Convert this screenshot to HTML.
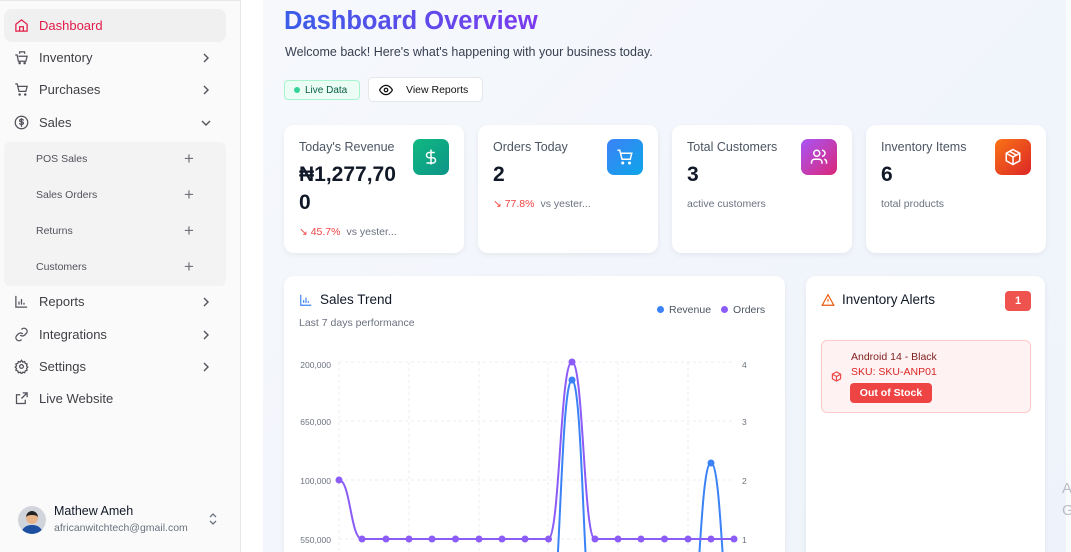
<!DOCTYPE html>
<html><head><meta charset="utf-8"><style>
*{box-sizing:border-box;margin:0;padding:0}
html{width:1071px;height:552px;overflow:hidden}
body{width:1071px;height:552px;overflow:hidden;font-family:"Liberation Sans",sans-serif;background:#fff;position:relative}
.sb{position:absolute;left:0;top:0;width:241px;height:552px;background:#fafafa;border-right:1px solid #e5e7eb;border-top:1px solid #e5e7eb}
.nav{position:absolute;left:4px;width:222px;height:33px;display:flex;align-items:center;font-size:13px;color:#3f3f46}
.nav svg.i{position:absolute;left:10px;width:15px;height:15px}
.nav span{position:absolute;left:35px}
.nav .ch{position:absolute;right:14px;width:12px;height:12px}
.sub{position:absolute;left:4px;top:141px;width:222px;height:144px;background:#f3f3f4;border-radius:6px}
.si{position:absolute;left:32px;font-size:10.5px;color:#52525b}
.pl{position:absolute;left:180px;font-size:17px;color:#71717a;font-weight:300}
.main{position:absolute;left:263px;top:0;width:803px;height:552px;background:linear-gradient(135deg,#f6f8fc,#eef3fb);overflow:hidden}
.card{position:absolute;background:#fff;border-radius:10px;box-shadow:0 2px 6px rgba(0,0,0,.06)}
.lbl{position:absolute;left:15px;top:15px;font-size:12.5px;color:#4b5563}
.val{position:absolute;left:15px;top:36px;font-size:21px;font-weight:bold;color:#111827;line-height:28px}
.ic{position:absolute;right:15px;top:14px;width:36px;height:36px;border-radius:7px;display:flex;align-items:center;justify-content:center}
.ic svg{width:18px;height:18px}
.tr{position:absolute;left:15px;font-size:10.5px;color:#ef4444}
.tr b{font-weight:normal;color:#6b7280;margin-left:6px}
.sm{position:absolute;left:15px;top:73px;font-size:10.5px;color:#6b7280}
</style></head><body>
<div class="sb">
 <div class="nav" style="top:8px;background:#f0f0f1;border-radius:8px;height:33px;color:#e11d48">
  <svg class="i" viewBox="0 0 24 24" fill="none" stroke="#e11d48" stroke-width="2"><path d="M3 10l9-7 9 7v11H3z"/><path d="M9 21v-7h6v7"/></svg><span>Dashboard</span></div>
 <div class="nav" style="top:40px"><svg class="i" viewBox="0 0 24 24" fill="none" stroke="#52525b" stroke-width="2"><path d="M2 8h3l2 10h12l2-8H7"/><path d="M9 6V3h8v3"/><circle cx="9" cy="21" r="1"/><circle cx="17" cy="21" r="1"/></svg><span>Inventory</span><svg class="ch" viewBox="0 0 12 12" fill="none" stroke="#52525b" stroke-width="1.4"><path d="M4 2l4 4-4 4"/></svg></div>
 <div class="nav" style="top:72px"><svg class="i" viewBox="0 0 24 24" fill="none" stroke="#52525b" stroke-width="2"><path d="M2 3h3l3 12h11l2-8H6"/><circle cx="9" cy="20" r="1"/><circle cx="18" cy="20" r="1"/></svg><span>Purchases</span><svg class="ch" viewBox="0 0 12 12" fill="none" stroke="#52525b" stroke-width="1.4"><path d="M4 2l4 4-4 4"/></svg></div>
 <div class="nav" style="top:105px"><svg class="i" viewBox="0 0 24 24" fill="none" stroke="#52525b" stroke-width="2"><circle cx="12" cy="12" r="10"/><path d="M15 9c0-1-1-2-3-2s-3 1-3 2 1 2 3 2 3 1 3 2-1 2-3 2-3-1-3-2M12 5v14"/></svg><span>Sales</span><svg class="ch" viewBox="0 0 12 12" fill="none" stroke="#52525b" stroke-width="1.4"><path d="M2 4l4 4 4-4"/></svg></div>
 <div class="sub">
  <div class="si" style="top:11px">POS Sales</div><div class="pl" style="top:7px">+</div>
  <div class="si" style="top:47px">Sales Orders</div><div class="pl" style="top:43px">+</div>
  <div class="si" style="top:83px">Returns</div><div class="pl" style="top:79px">+</div>
  <div class="si" style="top:119px">Customers</div><div class="pl" style="top:115px">+</div>
 </div>
 <div class="nav" style="top:284px"><svg class="i" viewBox="0 0 24 24" fill="none" stroke="#52525b" stroke-width="2"><path d="M3 3v18h18M8 17v-5M12 17V8M16 17v-3"/></svg><span>Reports</span><svg class="ch" viewBox="0 0 12 12" fill="none" stroke="#52525b" stroke-width="1.4"><path d="M4 2l4 4-4 4"/></svg></div>
 <div class="nav" style="top:317px"><svg class="i" viewBox="0 0 24 24" fill="none" stroke="#52525b" stroke-width="2"><path d="M10 13a5 5 0 007 0l3-3a5 5 0 00-7-7l-1 1M14 11a5 5 0 00-7 0l-3 3a5 5 0 007 7l1-1"/></svg><span>Integrations</span><svg class="ch" viewBox="0 0 12 12" fill="none" stroke="#52525b" stroke-width="1.4"><path d="M4 2l4 4-4 4"/></svg></div>
 <div class="nav" style="top:349px"><svg class="i" viewBox="0 0 24 24" fill="none" stroke="#52525b" stroke-width="2"><circle cx="12" cy="12" r="3"/><path d="M12 2l2 3 3-1 1 3 3 1-1 3 2 2-2 2 1 3-3 1-1 3-3-1-2 3-2-3-3 1-1-3-3-1 1-3-2-2 2-2-1-3 3-1 1-3 3 1z"/></svg><span>Settings</span><svg class="ch" viewBox="0 0 12 12" fill="none" stroke="#52525b" stroke-width="1.4"><path d="M4 2l4 4-4 4"/></svg></div>
 <div class="nav" style="top:381px"><svg class="i" viewBox="0 0 24 24" fill="none" stroke="#52525b" stroke-width="2"><path d="M14 3h7v7M21 3l-9 9M18 14v6H4V6h6"/></svg><span>Live Website</span></div>
 <div style="position:absolute;left:18px;top:505px;width:28px;height:28px;border-radius:50%;background:#d1d5db;overflow:hidden"><div style="position:absolute;left:8px;top:5px;width:12px;height:13px;border-radius:50%;background:#e8b48a;border-top:4px solid #222"></div><div style="position:absolute;left:3px;top:19px;width:22px;height:12px;border-radius:10px 10px 0 0;background:#1e4fa0"></div></div>
 <div style="position:absolute;left:54px;top:503px;font-size:12.5px;color:#111827">Mathew Ameh</div>
 <div style="position:absolute;left:54px;top:521px;font-size:10.5px;color:#6b7280">africanwitchtech@gmail.com</div>
 <svg style="position:absolute;left:207px;top:511px" width="12" height="14" viewBox="0 0 12 14" fill="none" stroke="#6b7280" stroke-width="1.3"><path d="M3 5l3-3 3 3M3 9l3 3 3-3"/></svg>
</div>
<div class="main">
 <div style="position:absolute;left:21px;top:7px;font-size:25.5px;font-weight:bold;background:linear-gradient(90deg,#3b5ee8,#7c3aed);-webkit-background-clip:text;color:transparent">Dashboard Overview</div>
 <div style="position:absolute;left:22px;top:45px;font-size:12.5px;color:#374151">Welcome back! Here's what's happening with your business today.</div>
 <div style="position:absolute;left:21px;top:80px;width:76px;height:20px;border:1px solid #a7f3d0;background:#ecfdf5;border-radius:4px;font-size:10px;color:#065f46;padding:4px 0 0 20px">Live Data<span style="position:absolute;left:9px;top:6px;width:6px;height:6px;border-radius:50%;background:#34d399"></span></div>
 <div style="position:absolute;left:105px;top:77px;width:115px;height:25px;border:1px solid #e5e7eb;background:#fff;border-radius:5px;font-size:10.5px;color:#111;padding:6px 0 0 37px">View Reports<svg style="position:absolute;left:10px;top:6px" width="14" height="12" viewBox="0 0 24 20" fill="none" stroke="#111" stroke-width="2.2"><path d="M1 10s4-8 11-8 11 8 11 8-4 8-11 8S1 10 1 10z"/><circle cx="12" cy="10" r="3"/></svg></div>

 <div class="card" style="left:21px;top:125px;width:180px;height:128px">
  <div class="lbl">Today's Revenue</div><div class="val">₦1,277,70<br>0</div>
  <div class="ic" style="background:linear-gradient(135deg,#10b981,#0d9488)"><svg viewBox="0 0 24 24" fill="none" stroke="#fff" stroke-width="2"><path d="M12 2v20M17 6H9.5a3.5 3.5 0 000 7h5a3.5 3.5 0 010 7H6"/></svg></div>
  <div class="tr" style="top:101px">↘ 45.7%<b>vs yester...</b></div></div>
 <div class="card" style="left:215px;top:125px;width:180px;height:128px">
  <div class="lbl">Orders Today</div><div class="val">2</div>
  <div class="ic" style="background:linear-gradient(135deg,#3b82f6,#0ea5e9)"><svg viewBox="0 0 24 24" fill="none" stroke="#fff" stroke-width="2"><path d="M2 3h3l3 12h11l2-8H6"/><circle cx="9" cy="20" r="1"/><circle cx="18" cy="20" r="1"/></svg></div>
  <div class="tr" style="top:73px">↘ 77.8%<b>vs yester...</b></div></div>
 <div class="card" style="left:409px;top:125px;width:180px;height:128px">
  <div class="lbl">Total Customers</div><div class="val">3</div>
  <div class="ic" style="background:linear-gradient(135deg,#a855f7,#db2777)"><svg viewBox="0 0 24 24" fill="none" stroke="#fff" stroke-width="2"><circle cx="9" cy="7" r="4"/><path d="M2 21v-2a4 4 0 014-4h6a4 4 0 014 4v2M16 3a4 4 0 010 8M22 21v-2a4 4 0 00-3-4"/></svg></div>
  <div class="sm">active customers</div></div>
 <div class="card" style="left:603px;top:125px;width:180px;height:128px">
  <div class="lbl">Inventory Items</div><div class="val">6</div>
  <div class="ic" style="background:linear-gradient(135deg,#f97316,#dc2626)"><svg viewBox="0 0 24 24" fill="none" stroke="#fff" stroke-width="2"><path d="M12 2l9 5v10l-9 5-9-5V7z"/><path d="M3 7l9 5 9-5M12 12v10M7.5 4.5l9 5"/></svg></div>
  <div class="sm">total products</div></div>

 <div class="card" style="left:21px;top:276px;width:501px;height:290px">
  <svg style="position:absolute;left:15px;top:17px" width="14" height="14" viewBox="0 0 24 24" fill="none" stroke="#3b82f6" stroke-width="2"><path d="M3 3v18h18M8 17v-5M12 17V8M16 17v-3"/></svg>
  <div style="position:absolute;left:36px;top:16px;font-size:13.5px;color:#111827">Sales Trend</div>
  <div style="position:absolute;left:15px;top:41px;font-size:10.5px;color:#6b7280">Last 7 days performance</div>
  <div style="position:absolute;left:373px;top:28px;font-size:10.5px;color:#4b5563"><span style="display:inline-block;width:7px;height:7px;border-radius:50%;background:#3b82f6;margin-right:5px"></span>Revenue<span style="display:inline-block;width:7px;height:7px;border-radius:50%;background:#8b5cf6;margin:0 5px 0 10px"></span>Orders</div>
 </div>
 <svg style="position:absolute;left:-263px;top:0" width="1071" height="552">
  <g stroke="#eceef2" stroke-dasharray="3 3" fill="none">
   <path d="M339 362H732M339 421H732M339 480H732M339 539H732M339 362V552M409 362V552M479 362V552M548 362V552M618 362V552M688 362V552"/>
  </g>
  <g font-size="8.5" fill="#6b7280" font-family="Liberation Sans">
   <text x="331" y="368" text-anchor="end">200,000</text><text x="331" y="425" text-anchor="end">650,000</text><text x="331" y="484" text-anchor="end">100,000</text><text x="331" y="543" text-anchor="end">550,000</text>
   <text x="742" y="368">4</text><text x="742" y="425">3</text><text x="742" y="484">2</text><text x="742" y="543">1</text>
  </g>
  <path d="M525,640 L548,640 C560,640 560,380 572,380 C583.5,380 583.5,640 595,640 M688,640 C699.5,640 699.5,463 711,463 C722.5,463 722.5,640 734,640" stroke="#3b82f6" stroke-width="2" fill="none"/>
  <path d="M339,480 C350.5,480 350.5,539 362,539 L548,539 C560,539 560,362 572,362 C583.5,362 583.5,539 595,539 L734,539" stroke="#8b5cf6" stroke-width="2" fill="none"/>
  <g fill="#8b5cf6">
   <circle cx="339" cy="480" r="3.5"/><circle cx="362" cy="539" r="3.5"/><circle cx="386" cy="539" r="3.5"/><circle cx="409" cy="539" r="3.5"/><circle cx="432" cy="539" r="3.5"/><circle cx="455.5" cy="539" r="3.5"/><circle cx="479" cy="539" r="3.5"/><circle cx="502" cy="539" r="3.5"/><circle cx="525" cy="539" r="3.5"/><circle cx="548.5" cy="539" r="3.5"/><circle cx="572" cy="362" r="3.5"/><circle cx="595" cy="539" r="3.5"/><circle cx="618" cy="539" r="3.5"/><circle cx="641" cy="539" r="3.5"/><circle cx="664.5" cy="539" r="3.5"/><circle cx="688" cy="539" r="3.5"/><circle cx="711" cy="539" r="3.5"/><circle cx="734" cy="539" r="3.5"/>
  </g>
  <g fill="#3b82f6"><circle cx="572" cy="380" r="3.5"/><circle cx="711" cy="463" r="3.5"/></g>
 </svg>

 <div class="card" style="left:543px;top:276px;width:239px;height:290px">
  <svg style="position:absolute;left:15px;top:17px" width="14" height="14" viewBox="0 0 24 24" fill="none" stroke="#ea580c" stroke-width="2"><path d="M12 3L2 21h20z"/><path d="M12 10v5M12 18v.5"/></svg>
  <div style="position:absolute;left:36px;top:16px;font-size:13.5px;color:#111827">Inventory Alerts</div>
  <div style="position:absolute;left:199px;top:15px;width:26px;height:20px;border-radius:4px;background:#ef5350;color:#fff;font-size:11px;font-weight:bold;text-align:center;line-height:20px">1</div>
  <div style="position:absolute;left:15px;top:64px;width:210px;height:73px;border:1px solid #fecaca;background:#fef2f2;border-radius:6px">
   <svg style="position:absolute;left:9px;top:30px" width="11" height="11" viewBox="0 0 24 24" fill="none" stroke="#ef4444" stroke-width="2.5"><path d="M12 2l9 5v10l-9 5-9-5V7z"/><path d="M3 7l9 5 9-5M12 12v10"/></svg>
   <div style="position:absolute;left:29px;top:10px;font-size:10.5px;color:#7f1d1d">Android 14 - Black</div>
   <div style="position:absolute;left:29px;top:25px;font-size:10.5px;color:#dc2626">SKU: SKU-ANP01</div>
   <div style="position:absolute;left:28px;top:42px;width:82px;height:20px;background:#ef4444;border-radius:4px;color:#fff;font-size:10.5px;font-weight:bold;text-align:center;line-height:20px">Out of Stock</div>
  </div>
 </div>
</div>
<div style="position:absolute;left:1066px;top:0;width:5px;height:552px;background:#fafbfc"></div>
<div style="position:absolute;left:1062px;top:478px;font-size:15px;color:#b8bcc4;line-height:22px">A<br>G</div>
</body></html>
